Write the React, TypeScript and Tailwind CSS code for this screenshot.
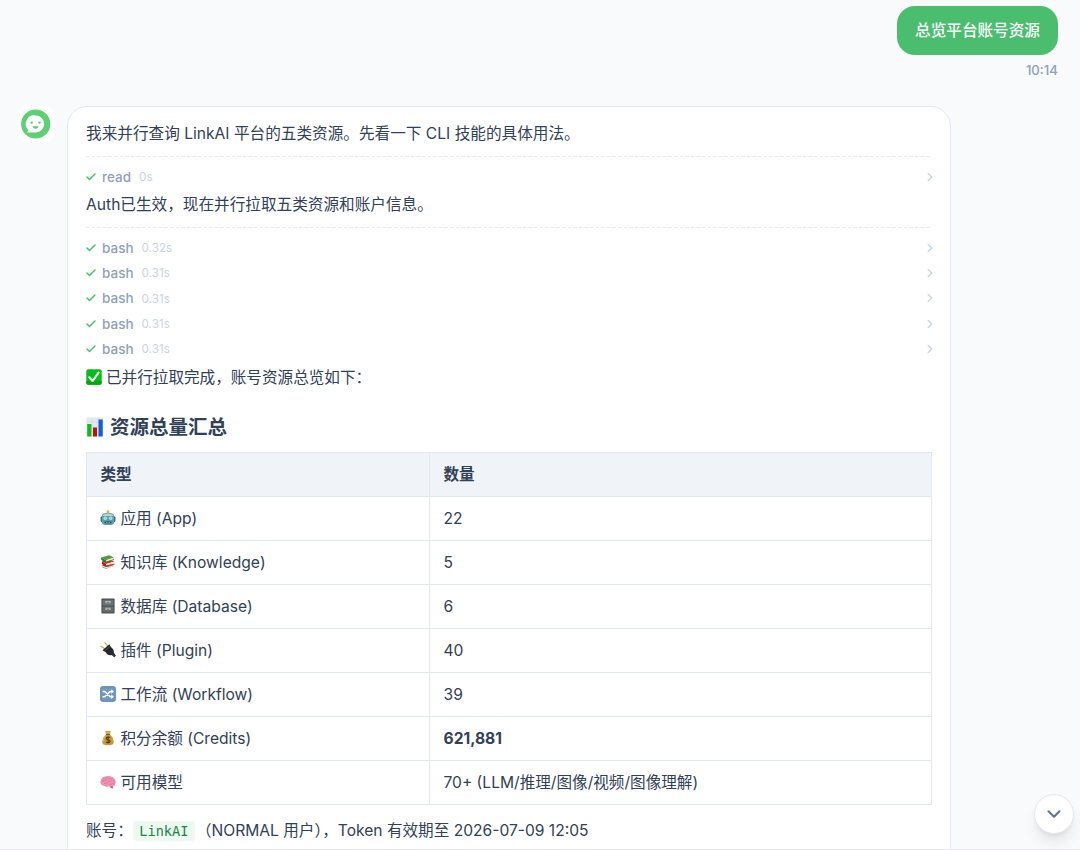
import type { ReactNode } from "react"
import { Check, ChevronDown, ChevronRight } from "lucide-react"

const CheckEmoji = () => (
  <svg viewBox="0 0 16 16" className="h-[16px] w-[16px] shrink-0">
    <rect x="0.3" y="0.3" width="15.4" height="15.4" rx="2" fill="#08bd17" />
    <path d="M0.3 12h15.4v1.700a2 2 0 0 1-2 2H2.300a2 2 0 0 1-2-2z" fill="#06a613" />
    <path d="M3.400 8.400 6.600 12 12.600 3.600" fill="none" stroke="#fff" strokeWidth="2.100" strokeLinecap="round" strokeLinejoin="round" />
  </svg>
)

const ChartEmoji = () => (
  <svg viewBox="0 0 18 20" className="h-[20px] w-[18px] shrink-0">
    <rect x="0.500" y="0.500" width="17" height="19" fill="#e3e8ed" />
    <path d="M0.500 5h17M0.500 10h17M0.500 15h17M6 0.500v19M12 0.500v19" stroke="#cbd3da" strokeWidth="0.500" />
    <rect x="1.200" y="7" width="4.200" height="12.500" fill="#0bbb20" />
    <rect x="7" y="10.500" width="4" height="9" fill="#bd1117" />
    <rect x="12.500" y="2.500" width="4.200" height="17" fill="#1261c9" />
  </svg>
)

const RobotEmoji = () => (
  <svg viewBox="0 0 16 16" className="h-4 w-4 shrink-0">
    <path d="M8 4V1.500" stroke="#9b6b44" strokeWidth="1" />
    <circle cx="8" cy="1.600" r="1.300" fill="#f5a623" />
    <rect x="0.600" y="6.500" width="2.200" height="5.500" rx="1" fill="#39656c" />
    <rect x="13.200" y="6.500" width="2.200" height="5.500" rx="1" fill="#39656c" />
    <path d="M1.800 6.500C1.800 4 4 2.800 8 2.800s6.200 1.200 6.200 3.700V12c0 2-1.500 3-3.500 3H5.300c-2 0-3.500-1-3.500-3z" fill="#5aa0a8" />
    <path d="M2.500 6c.7-1.800 2.500-2.600 5.500-2.600s4.800.8 5.500 2.600z" fill="#bcd3d4" />
    <circle cx="5.300" cy="8.200" r="1.800" fill="#a5f0f6" />
    <circle cx="10.700" cy="8.200" r="1.800" fill="#a5f0f6" />
    <circle cx="5.300" cy="8.200" r="0.700" fill="#55bcc6" />
    <circle cx="10.700" cy="8.200" r="0.700" fill="#55bcc6" />
    <path d="m8 8.800-.9 1.700h1.800z" fill="#d1483c" />
    <rect x="4.500" y="11.500" width="7" height="1.800" rx="0.700" fill="#294f59" />
    <path d="M6 12.400h4" stroke="#b4d6da" strokeWidth="0.600" strokeDasharray="1 .5" />
  </svg>
)

const BooksEmoji = () => (
  <svg viewBox="0 0 16 16" className="h-4 w-4 shrink-0">
    <path d="m2.300 11.300 7.700-1.300 4 1.800-8 2.900-3.700-1.500z" fill="#8c4a3e" />
    <path d="m2.500 11.500 3.500 1.600 8-2.200v1.400l-8 2.100-3.500-1.300z" fill="#e5ddd3" />
    <path d="m2 7.200 7.500-1.200 5 1.500-8.500 2.600z" fill="#d62f2b" />
    <path d="m2 7.200 4 2.900v2.600l-4-2.400z" fill="#b41d20" />
    <path d="m6 10.100 8-2.300v1.600l-8 2.300z" fill="#eee7dc" />
    <path d="m6 11.700 8.500-2.300v1.200L6 13z" fill="#c72926" />
    <path d="m1 3.600 8.200-2.400L14 3.600 6 6.200z" fill="#4b9f3d" />
    <path d="m1 3.600 5 2.600v2.400L1.300 6z" fill="#2f7a2b" />
    <path d="m6 6.200 7.600-2.500v1.500L6 7.700z" fill="#e8e8d8" />
    <path d="M6 7.700 14 5v.9L6 8.600z" fill="#3c8c34" />
  </svg>
)

const CabinetEmoji = () => (
  <svg viewBox="0 0 16 16" className="h-4 w-4 shrink-0">
    <rect x="1.400" y="0.600" width="13.200" height="14.800" rx="0.700" fill="#4d5254" />
    <rect x="2.600" y="1.800" width="10.800" height="5.700" fill="#6b7173" />
    <rect x="2.600" y="8.700" width="10.800" height="5.500" fill="#666c6e" />
    <path d="M5.500 3h5v2.200h-5zM5.500 9.800h5V12h-5z" fill="#c6cccd" />
    <path d="M6.500 4.300h3M6.500 11.100h3" stroke="#4d5254" strokeWidth="0.900" />
  </svg>
)

const PlugEmoji = () => (
  <svg viewBox="0 0 16 16" className="h-4 w-4 shrink-0">
    <path d="M4.700 6.700.6 3.900M8 4.300 4.600.4" stroke="#c4a458" strokeWidth="1.200" />
    <path d="m2.500 8.200 6.900-5.900 1.500 2.700c2 1.400 3.200 3.600 2.900 5.600l2.100 3.100-1.700 1.600-2.500-2.300c-2.400.6-4.700-.3-6-2.800z" fill="#252728" />
    <path d="m5.200 8.400 4.500-3.700" stroke="#65696b" strokeWidth="0.700" />
    <path d="m11.500 11.400 3 2.800" stroke="#565b5d" strokeWidth="0.600" />
  </svg>
)

const ShuffleEmoji = () => (
  <svg viewBox="0 0 16 16" className="h-4 w-4 shrink-0">
    <rect x="0.200" y="0.200" width="15.600" height="15.600" rx="2.500" fill="#7199bd" />
    <rect x="0.700" y="0.700" width="14.600" height="14.600" rx="2.200" fill="none" stroke="#5b83a8" strokeWidth="0.700" />
    <path d="M2.500 5.400h2.200l5.500 5.300h1.500M2.500 10.700h2.200l5.500-5.300h1.500" fill="none" stroke="#fff" strokeWidth="1.500" />
    <path d="m11.200 3.200 2.800 2.200-2.800 2.300zM11.200 8.500l2.800 2.200-2.800 2.200z" fill="#fff" />
  </svg>
)

const MoneyEmoji = () => (
  <svg viewBox="0 0 16 16" className="h-4 w-4 shrink-0">
    <path d="M5.200 1.200c1-.7 1.600.3 2.700-.4 1 .7 1.900-.3 2.900.4L9.700 4.600c2.700 1.800 4.200 5 3.900 8-.1 2-1.300 2.700-5.600 2.700s-5.500-.7-5.600-2.700c-.3-3 1.300-6.200 3.900-8z" fill="#c79b3b" />
    <path d="M6 2c.8.700 2.800.7 4 0M5 6c-1.200 1.300-1.700 3-1.700 5" fill="none" stroke="#e2c271" strokeWidth="0.900" />
    <path d="M6 4.500h4" stroke="#80551e" strokeWidth="1" />
    <path d="M10 7.600c-.8-.9-3.700-.9-3.700.8 0 1.900 3.800.9 3.800 2.800 0 1.700-3.200 1.800-4 .7M8.100 6.200v7.300" fill="none" stroke="#503713" strokeWidth="1.100" />
  </svg>
)

const BrainEmoji = () => (
  <svg viewBox="0 0 16 16" className="h-4 w-4 shrink-0">
    <path d="M9.500 12c.5 1.500 1.500 2.300 2.800 2.500l.9-.5-.7-2.500z" fill="#bd6380" />
    <path d="M.4 8.300C.4 4.800 3.500 2 8 2c4.300 0 7.500 2.600 7.700 6 .1 2.400-1.400 4.500-3.700 4.600-1.500.1-2.300-.6-3.300-.4-1.200 1-3 .9-4-.1C2.500 12 .4 10.500.4 8.300z" fill="#ee93b1" />
    <path d="M2 7.500c1.400-2 2.600.2 4-1.400 1.200-1.300-.1-2.400 1.500-3M4 9.800c1.500-1.600 3 0 4.300-1.500 1-1.200 2.200-.3 3.200-1.300M8.800 5c1.200-.8 2 .5 3.500-.4M9.500 10.700c1.300-1.400 3.200.1 4.800-1.800M3.200 5.100l1-.6M13 6.500l1.500.8" fill="none" stroke="#cb6a8c" strokeWidth="0.600" strokeLinecap="round" />
  </svg>
)

const Avatar = () => (
  <div className="flex h-9 w-9 shrink-0 items-center justify-center rounded-lg bg-white">
    <svg viewBox="0 0 30 30" className="h-[30px] w-[30px]">
      <circle cx="14.700" cy="15" r="14.600" fill="#5fcf73" />
      <path d="M14.700 6.500a8.500 8.500 0 1 1 0 17H6.800c-.7 0-.8-.6-.4-1l1.200-1.300A8.500 8.500 0 0 1 14.700 6.500z" fill="#fff" />
      <circle cx="10.700" cy="13.600" r="1.200" fill="#5fcf73" />
      <circle cx="18.500" cy="13.600" r="1.200" fill="#5fcf73" />
      <path d="M11.500 17.300h6.200c-.4 1.500-1.500 2.400-3.100 2.400s-2.700-.9-3.100-2.400z" fill="#5fcf73" />
    </svg>
  </div>
)

const DashedLine = () => (
  <div className="mt-[8px] mb-[7px] h-px bg-[repeating-linear-gradient(to_right,#e8eaed_0px,#e8eaed_3.6px,transparent_3.6px,transparent_5.6px)]" />
)

const ToolRow = ({ name, time }: { name: string; time: string }) => (
  <div className="flex h-[25.4px] items-center">
    <Check className="-ml-[1px] h-[12px] w-[12px] text-[#4abe6e]" strokeWidth={2.900} />
    <span className="ml-[5px] text-[13.500px] font-medium text-slate-400">{name}</span>
    <span className="ml-2 pt-[2px] text-[11.700px] text-slate-300">{time}</span>
    <ChevronRight className="-mr-[5px] ml-auto h-[14px] w-[14px] text-slate-300" strokeWidth={2.300} />
  </div>
)

const rows: { icon: ReactNode; label: string; value: ReactNode }[] = [
  { icon: <RobotEmoji />, label: "应用 (App)", value: "22" },
  { icon: <BooksEmoji />, label: "知识库 (Knowledge)", value: "5" },
  { icon: <CabinetEmoji />, label: "数据库 (Database)", value: "6" },
  { icon: <PlugEmoji />, label: "插件 (Plugin)", value: "40" },
  { icon: <ShuffleEmoji />, label: "工作流 (Workflow)", value: "39" },
  { icon: <MoneyEmoji />, label: "积分余额 (Credits)", value: <strong className="font-bold">621,881</strong> },
  { icon: <BrainEmoji />, label: "可用模型", value: "70+ (LLM/推理/图像/视频/图像理解)" },
]

const App = () => {
  return (
    <div className="relative flex h-[850px] w-[1080px] flex-col overflow-hidden bg-[#f9fafc] font-['Inter','Noto_Sans_CJK_SC',sans-serif] text-[15.600px] text-slate-700">
      <div className="min-h-0 flex-1 overflow-hidden">
        {/* user message */}
        <div className="flex h-[106px] flex-col items-end pr-[22px] pt-[6px]">
          <div className="flex h-[49px] w-[161px] items-center justify-center rounded-[18px] bg-[#4abe6e] font-medium text-white">总览平台账号资源</div>
          <div className="mt-[5px] text-[13.200px] leading-5 font-medium text-slate-400">10:14</div>
        </div>

        {/* assistant message */}
        <div className="flex items-start pl-[18px]">
          <Avatar />
          <div className="ml-[13px] h-[800px] w-[884px] rounded-[20px] border border-slate-200 bg-white pl-[18px] pr-[18px] pt-[13px]">
            <p className="h-7 text-[15.640px] leading-7">我来并行查询 LinkAI 平台的五类资源。先看一下 CLI 技能的具体用法。</p>
            <DashedLine />
            <ToolRow name="read" time="0s" />
            <p className="mt-[1.6px] h-7 text-[15.640px] leading-7">Auth已生效，现在并行拉取五类资源和账户信息。</p>
            <DashedLine />
            <ToolRow name="bash" time="0.32s" />
            <ToolRow name="bash" time="0.31s" />
            <ToolRow name="bash" time="0.31s" />
            <ToolRow name="bash" time="0.31s" />
            <ToolRow name="bash" time="0.31s" />
            <p className="mt-px flex h-[28px] items-center gap-1">
              <CheckEmoji />
              <span className="pt-px">已并行拉取完成，账号资源总览如下：</span>
            </p>
            <h3 className="mt-[22px] flex h-7 items-center gap-[6px] text-[19.500px] font-semibold">
              <ChartEmoji />
              <span className="pt-[2px]">资源总量汇总</span>
            </h3>
            <table className="mt-[11px] w-full table-fixed border-collapse text-left">
              <thead>
                <tr className="h-[44px] bg-[#f0f3f8]">
                  <th className="w-[343px] border border-slate-200 p-0 pl-[13.500px] font-semibold">类型</th>
                  <th className="border border-slate-200 p-0 pl-[13.500px] font-semibold">数量</th>
                </tr>
              </thead>
              <tbody>
                {rows.map((row) => (
                  <tr key={row.label} className="h-[44px]">
                    <td className="border border-slate-200 p-0 pl-[13px]">
                      <div className="flex items-center gap-[4.5px]">
                        {row.icon}
                        <span>{row.label}</span>
                      </div>
                    </td>
                    <td className="border border-slate-200 p-0 pl-[13.500px]">{row.value}</td>
                  </tr>
                ))}
              </tbody>
            </table>
            <p className="mt-[12px] flex h-7 items-center whitespace-pre">
              <span>账号：</span>
              <code className="flex h-5 items-center rounded bg-[#edf8f0] px-[6.500px] font-['DejaVu_Sans_Mono',monospace] text-[13.600px] text-[#228547]">LinkAI</code>
              <span className="ml-[1px]">（NORMAL 用户），Token 有效期至 2026-07-09 12:05</span>
            </p>
          </div>
        </div>
      </div>
      <div className="h-px shrink-0 bg-slate-200" />

      <button className="absolute right-[6px] bottom-[16px] flex h-10 w-10 items-center justify-center rounded-full border border-slate-200 bg-white shadow-lg">
        <ChevronDown className="h-[22px] w-[22px] text-slate-500" strokeWidth={2.300} />
      </button>
    </div>
  )
}

export default App
